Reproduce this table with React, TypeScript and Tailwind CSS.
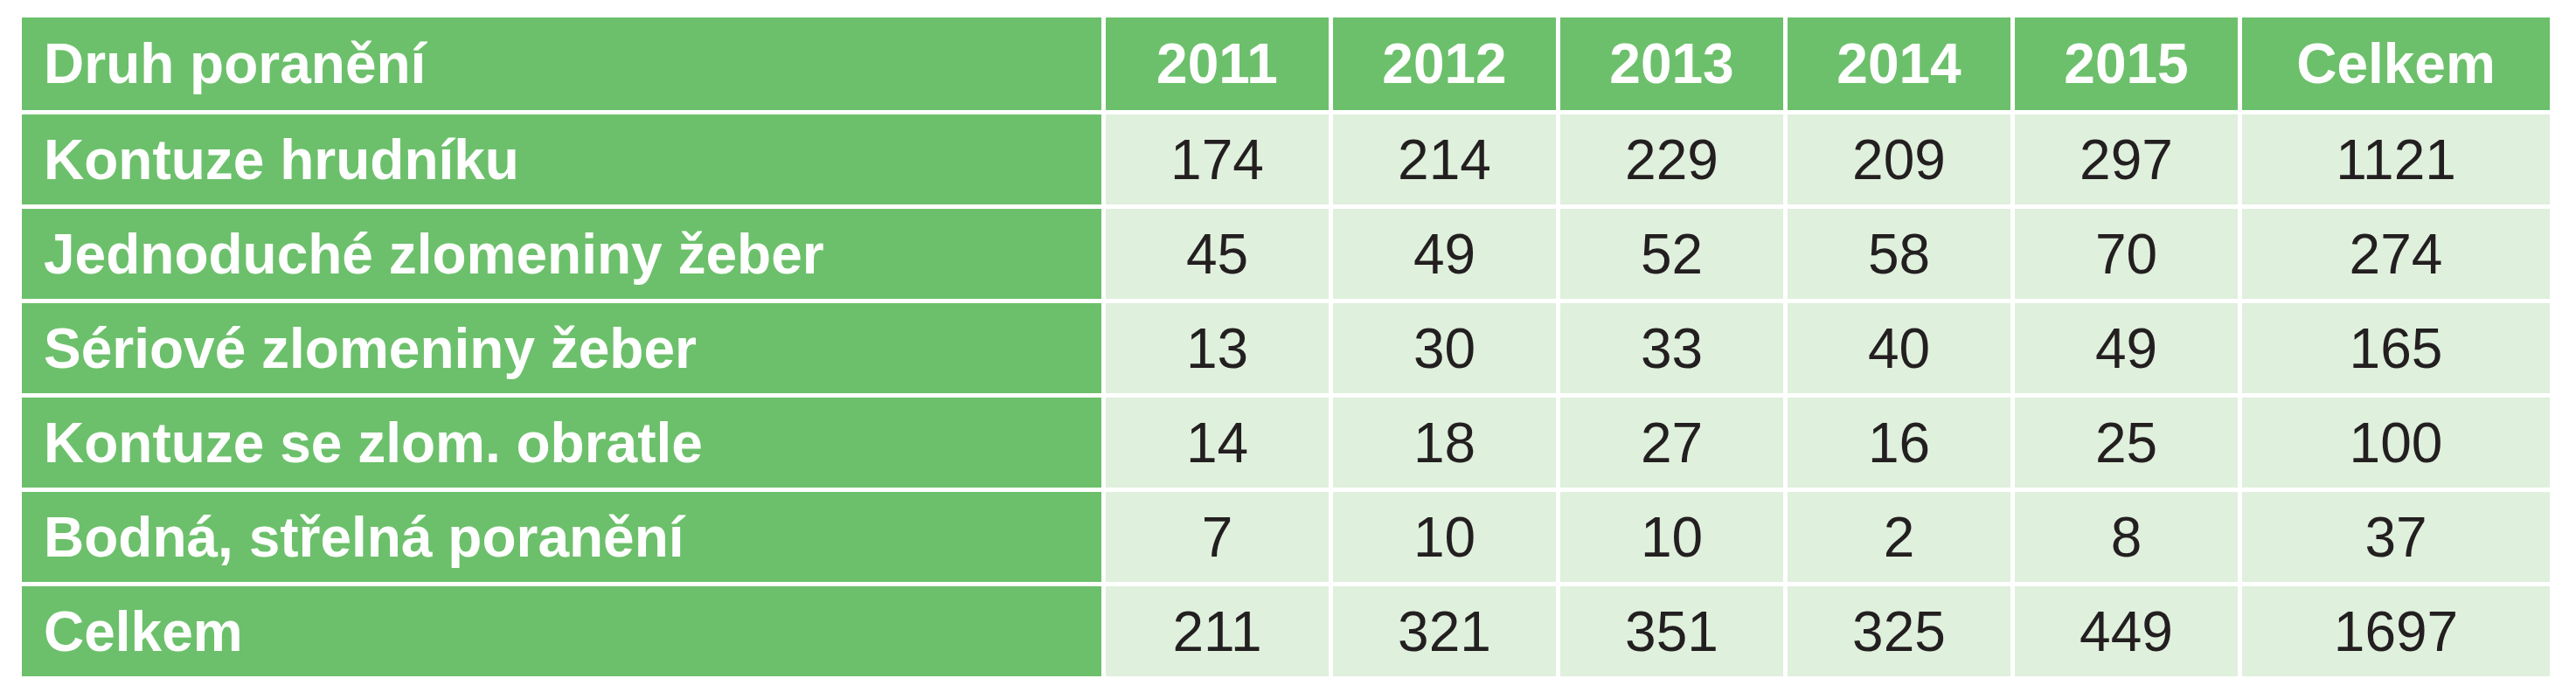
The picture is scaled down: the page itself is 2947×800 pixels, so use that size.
const years = ["2011", "2012", "2013", "2014", "2015", "Celkem"];

const rows: { label: string; values: number[] }[] = [
  { label: "Kontuze hrudníku", values: [174, 214, 229, 209, 297, 1121] },
  { label: "Jednoduché zlomeniny žeber", values: [45, 49, 52, 58, 70, 274] },
  { label: "Sériové zlomeniny žeber", values: [13, 30, 33, 40, 49, 165] },
  { label: "Kontuze se zlom. obratle", values: [14, 18, 27, 16, 25, 100] },
  { label: "Bodná, střelná poranění", values: [7, 10, 10, 2, 8, 37] },
  { label: "Celkem", values: [211, 321, 351, 325, 449, 1697] },
];

export default function App() {
  return (
    <div className="min-h-screen bg-white pt-[20px] pl-[25px] font-['Liberation_Sans',Arial,sans-serif] text-[64px] leading-none">
      <div className="grid w-[2892px] grid-cols-[1235px_repeat(5,255px)_352px] grid-rows-[106px_repeat(6,103px)] gap-[5px]">
        {/* Header */}
        <div className="flex items-center bg-[#6cc06b] pl-[25px] font-bold text-white">Druh poranění</div>
        {years.map((y) => (
          <div key={y} className="flex items-center justify-center bg-[#6cc06b] font-bold text-white">
            {y}
          </div>
        ))}

        {rows.map((row) => (
          <Row key={row.label} label={row.label} values={row.values} />
        ))}
      </div>
    </div>
  );
}

function Row({ label, values }: { label: string; values: number[] }) {
  return (
    <>
      <div className="flex items-center bg-[#6cc06b] pl-[25px] font-bold text-white">{label}</div>
      {values.map((v, i) => (
        <div key={i} className="flex items-center justify-center bg-[#dff0dc] text-[#231f20]">
          {v}
        </div>
      ))}
    </>
  );
}
